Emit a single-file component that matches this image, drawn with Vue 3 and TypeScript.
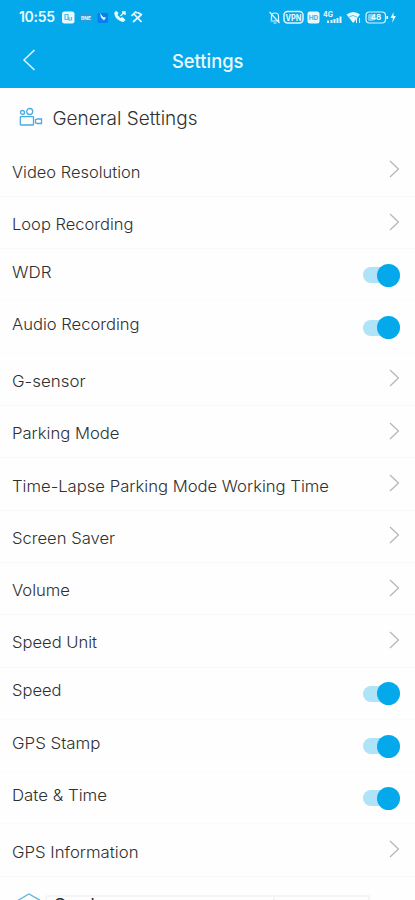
<script setup lang="ts">
interface Setting {
  label: string
  toggle?: boolean
  width: number
}

const settings: Setting[] = [
  { label: 'Video Resolution', width: 128.5 },
  { label: 'Loop Recording', width: 121.5 },
  { label: 'WDR', toggle: true, width: 39.5 },
  { label: 'Audio Recording', toggle: true, width: 127.5 },
  { label: 'G-sensor', width: 73.5 },
  { label: 'Parking Mode', width: 107.5 },
  { label: 'Time-Lapse Parking Mode Working Time', width: 317 },
  { label: 'Screen Saver', width: 103 },
  { label: 'Volume', width: 58 },
  { label: 'Speed Unit', width: 85 },
  { label: 'Speed', toggle: true, width: 49.5 },
  { label: 'GPS Stamp', toggle: true, width: 88.5 },
  { label: 'Date & Time', toggle: true, width: 95 },
  { label: 'GPS Information', width: 126.5 },
]
</script>

<template>
  <main class="screen">
    <header class="header">
      <div class="status">
        <span class="clock">10:55</span>
        <svg class="left-icons" width="84" height="16" viewBox="0 0 84 16">
          <rect x="2" y="2.500" width="12.500" height="12" rx="2.500" fill="#e8faff" />
          <path d="M5 5.500h3v5H5zM9 8v3h2.500V8" fill="none" stroke="#53bfe9" stroke-width="1.200" />
          <rect x="20.500" y="4.500" width="11" height="8.500" rx="1" fill="#3198d4" />
          <text x="26" y="11" text-anchor="middle" font-size="5" font-weight="700" fill="#eaf9ff">BNE</text>
          <rect x="37.500" y="4" width="10.500" height="10" rx="1" fill="#087ef0" />
          <path d="M40 4l3 4 3 .5-2 3-3-3z" fill="#e8faff" />
          <path d="M54.500 3c-1 4 3 9 9 10l2-2-3-3-2 1-3-3 1-2-2-2z" fill="#e8faff" />
          <path d="M60.500 7l4-4M62 3h3v3" fill="none" stroke="#e8faff" stroke-width="1.400" />
          <path d="M73.500 4.500l8 8.500M81 6l-8 7M71.500 7l4-4 2 1M78 3.500l4 2.500" fill="none" stroke="#e8faff" stroke-width="1.700" />
        </svg>
        <svg class="right-icons" width="130" height="16" viewBox="0 0 130 16">
          <g fill="none" stroke="#dff6ff" stroke-width="1.200">
            <path d="M1.500 12h9M2.500 11V7q0-3 3.500-3t3.500 3v5M4.500 14h3M.5 3l10 11" />
            <rect x="15" y="2.500" width="19" height="11.500" rx="3.500" stroke-width="1.500" />
            <rect x="97" y="3" width="19.500" height="11" rx="3.500" />
            <path d="M118.200 7v3" stroke-width="1.700" />
          </g>
          <text x="24.500" y="11.500" text-anchor="middle" font-size="9" font-weight="700" textLength="16" lengthAdjust="spacingAndGlyphs" fill="#e8faff">VPN</text>
          <rect x="38.500" y="2.500" width="12" height="12" rx="2.500" fill="#e8faff" />
          <text x="44.500" y="11" text-anchor="middle" font-size="6.500" font-weight="700" fill="#36b5e8">HD</text>
          <text x="54" y="8" font-size="7" font-weight="700" fill="#e8faff">4G</text>
          <g fill="#e8faff">
            <path d="M58 11.500h2V14h-2zM61.500 11h2v3h-2zM64.500 10h2v4h-2zM67.500 9h2v5h-2zM70.500 7.500h2V14h-2z" />
            <path d="M77.500 5.500q7-5 13.500 0L84.200 14z" />
            <rect x="99" y="5" width="6" height="7" rx="1.500" opacity=".5" />
            <path d="M124.500 3l-3 6h2.500l-1 5 4-7h-2.500z" />
          </g>
          <path d="M80 8q4-3 8 0" fill="none" stroke="#36b8ec" stroke-width=".8" />
          <path d="M87.500 9v5M90.500 9v5" stroke="#e8faff" stroke-width="1" />
          <text x="107" y="11.400" text-anchor="middle" font-size="8" font-weight="700" fill="#f2fcff">48</text>
        </svg>
      </div>
      <div class="toolbar">
        <svg class="back" width="14" height="22" viewBox="0 0 14 22" role="img" aria-label="Back">
          <path d="M12.500 1L2 11l10.500 10" fill="none" stroke="#e2f7ff" stroke-width="1.500" />
        </svg>
        <svg class="title" width="74" height="28" role="heading" aria-label="Settings">
          <text x="1" y="21" textLength="71.500" lengthAdjust="spacingAndGlyphs">Settings</text>
        </svg>
      </div>
    </header>

    <section>
      <div class="section-title">
        <svg class="camera" width="24" height="20" viewBox="0 0 24 20">
          <g fill="none" stroke="#4aabe2" stroke-width="1.300">
            <circle cx="3.500" cy="5.500" r="2" />
            <circle cx="10.700" cy="4.500" r="3" />
            <rect x="1.300" y="9.700" width="13.200" height="8.300" rx=".5" />
            <path d="M16.500 12.700l2-.7h4v4.500h-4l-2-.7z" />
          </g>
        </svg>
        <svg class="heading" width="150" height="28">
          <text x="0.500" y="21" textLength="145" lengthAdjust="spacingAndGlyphs">General Settings</text>
        </svg>
      </div>
      <div
        v-for="setting in settings"
        :key="setting.label"
        class="row"
        :class="{ switchable: setting.toggle }"
      >
        <svg class="label" width="330" height="24">
          <text x="0" y="17.500" :textLength="setting.width" lengthAdjust="spacingAndGlyphs">{{ setting.label }}</text>
        </svg>
        <span v-if="setting.toggle" class="toggle"><span class="thumb"></span></span>
        <svg v-else class="chevron" width="11" height="18" viewBox="0 0 11 18">
          <path d="M1 1l8.500 8L1 17" fill="none" stroke="#b5b5b5" stroke-width="1.200" />
        </svg>
      </div>
    </section>

    <section class="next-section">
      <svg class="hexagon" width="24" height="26" viewBox="0 0 24 26">
        <path d="M1.500 7L12 1l10.500 6v12L12 25 1.500 19z" fill="none" stroke="#67b4de" stroke-width="1.400" />
      </svg>
      <div class="panel">
        <span>Card</span>
        <i></i>
      </div>
    </section>
  </main>
</template>

<style>
body {
  background: #fefefe;
}
</style>

<style scoped>
.screen {
  width: 100%;
  height: 900px;
  overflow: hidden;
  background: #fefefe;
  font-family: Inter, Roboto, sans-serif;
  color: #303030;
}
svg {
  display: block;
  flex: none;
}
.header {
  height: 88px;
  background: #03a9eb;
}
.status {
  display: flex;
  height: 34px;
  align-items: center;
  padding: 0 16px 0 19px;
}
.clock {
  width: 41px;
  font-size: 14px;
  font-weight: 600;
  line-height: 18px;
  letter-spacing: -0.3px;
  color: #ecfaff;
}
.right-icons {
  margin-left: auto;
}
.toolbar {
  display: grid;
  grid-template-columns: 1fr auto 1fr;
  height: 54px;
  align-items: center;
  padding: 0 22px;
}
.back {
  margin-bottom: 2px;
}
.title {
  fill: #ecfaff;
  font-size: 19px;
  font-weight: 500;
}
.section-title {
  display: flex;
  height: 56.600px;
  align-items: center;
  padding: 3px 19px 0;
  box-sizing: border-box;
}
.camera {
  margin-bottom: 2px;
}
.heading {
  margin-left: 9px;
  font-size: 18.500px;
  font-weight: 300;
  fill: #303030;
}
.row {
  display: flex;
  box-sizing: border-box;
  height: 52.300px;
  align-items: center;
  justify-content: space-between;
  padding: 0 15px 0 12px;
  border-bottom: 1px solid #f8f8f8;
}
.label {
  padding-top: 3px;
  font-size: 16px;
  font-weight: 300;
  fill: #303030;
}
.switchable .label {
  padding: 0 0 6px;
}
.switchable {
  border-bottom-color: #fbfbfb;
}
.chevron {
  margin-bottom: 2px;
}
.toggle {
  display: flex;
  width: 37px;
  height: 16px;
  align-items: center;
  justify-content: flex-end;
  border-radius: 8px;
  background: #afe3f8;
  margin-top: 1px;
}
.thumb {
  flex: none;
  width: 23px;
  height: 23px;
  border-radius: 50%;
  background: #03a9eb;
}
.next-section {
  display: flex;
  height: 30px;
  align-items: flex-start;
  padding: 16px 44px 0 17px;
}
.panel {
  display: flex;
  box-sizing: border-box;
  width: 325px;
  height: 30px;
  margin: 2px 0 0 4px;
  border: 2px solid #f5f5f5;
  border-radius: 3px 0 0;
}
.panel span {
  margin-left: 6px;
  font-size: 18.500px;
  font-weight: 400;
  line-height: 20px;
  margin-top: -2px;
}
.panel i {
  width: 2px;
  margin-left: auto;
  margin-right: 93px;
  background: #f5f5f5;
}
</style>
